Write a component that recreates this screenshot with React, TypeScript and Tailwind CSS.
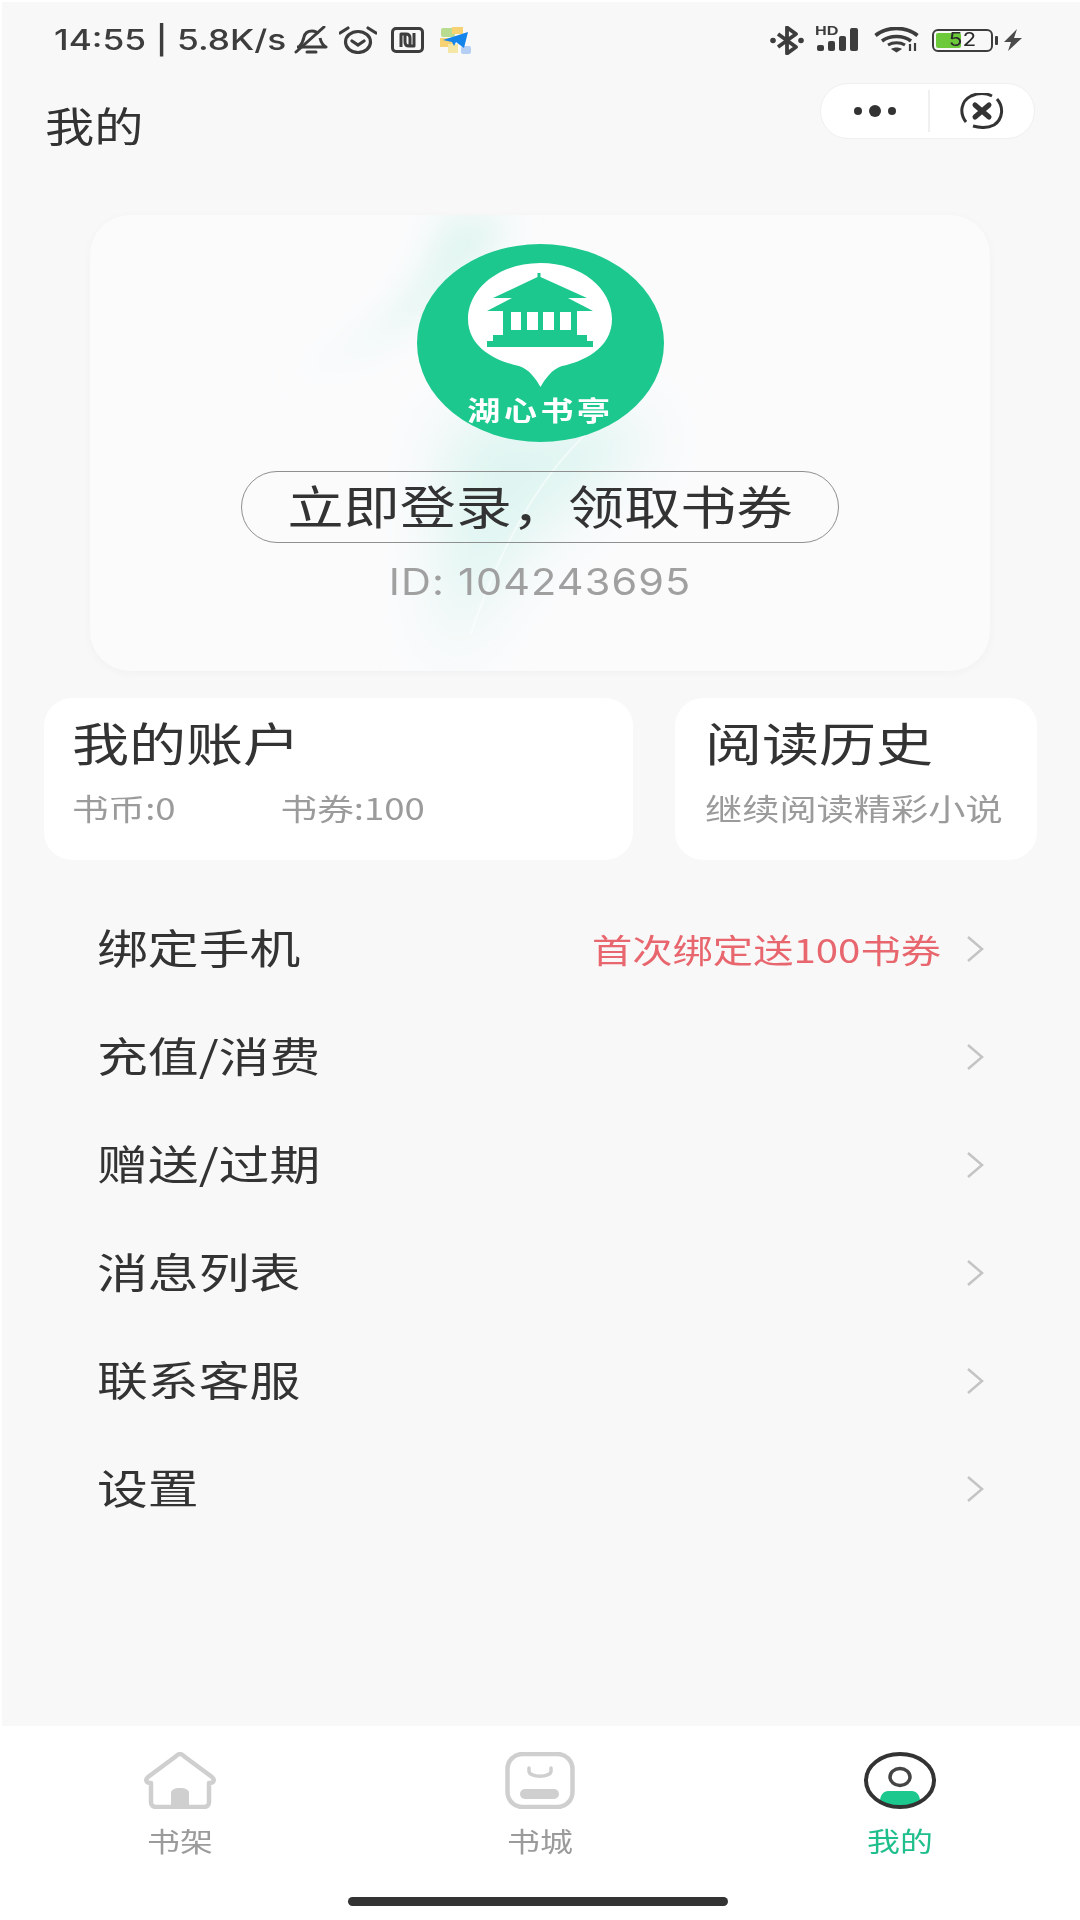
const cjk = "font-['Noto_Sans_CJK_SC','Noto_Sans',sans-serif]";

const menu = [
  { label: "绑定手机", hint: "首次绑定送100书券" },
  { label: "充值/消费" },
  { label: "赠送/过期" },
  { label: "消息列表" },
  { label: "联系客服" },
  { label: "设置" },
];

function BellOff() {
  return (
    <svg width="34" height="28" viewBox="0 0 34 28" fill="none" stroke="#3d3d3d" strokeWidth="3">
      <path d="M5 21c3-3 4-5 5-10 1-4 4-6 8-6 3 0 5 1 6 3M26 12c1 4 2 7 6 9H3" strokeLinejoin="round" />
      <path d="M2 26 30 1M13 26h9" strokeLinecap="round" />
    </svg>
  );
}

function Alarm() {
  return (
    <svg width="38" height="28" viewBox="0 0 38 28" fill="none" stroke="#3d3d3d" strokeWidth="3.2">
      <ellipse cx="19" cy="16" rx="12.5" ry="10.5" />
      <path d="M13 15l6 4 6-4M1 7l8-5M37 7l-8-5" strokeLinecap="round" />
    </svg>
  );
}

function Nfc() {
  return (
    <svg width="33" height="26" viewBox="0 0 33 26" fill="none" stroke="#3d3d3d" strokeWidth="3">
      <rect x="1.5" y="1.5" width="30" height="23" rx="3.5" />
      <path d="M10 20V7h5c3 0 4 2 4 4v9M23 6v13h-5c-3 0-4-2-4-4V7" strokeLinejoin="round" />
    </svg>
  );
}

function AppIcon() {
  return (
    <svg width="32" height="27" viewBox="0 0 32 27">
      <rect x="1" y="1" width="14" height="9" rx="2" fill="#b9dd90" />
      <rect x="12" y="0" width="11" height="7" fill="#f6d273" />
      <rect x="0" y="11" width="14" height="9" fill="#f6d273" />
      <rect x="8" y="17" width="10" height="9" fill="#f4e6a5" />
      <rect x="21" y="19" width="10" height="8" rx="2" fill="#b5cff4" />
      <path d="M3 13 28 5 24 21 16 15 14 19 12 15Z" fill="#1284ea" />
    </svg>
  );
}

function Bluetooth() {
  return (
    <svg width="34" height="29" viewBox="0 0 34 29" fill="none" stroke="#3d3d3d" strokeWidth="3.8">
      <path d="M8 8l18 13-9 6.500V1.500l9 6.500L8 21" strokeLinejoin="round" />
      <circle cx="3" cy="14.500" r="2.800" fill="#3d3d3d" stroke="none" />
      <circle cx="31" cy="14.500" r="2.800" fill="#3d3d3d" stroke="none" />
    </svg>
  );
}

function Signal() {
  return (
    <div className="relative w-[47px] h-[24px]">
      <span className="absolute left-0 top-[-3px] text-[13px] leading-[12px] font-bold text-[#3d3d3d] font-['Liberation_Sans',sans-serif] scale-x-125 origin-left">HD</span>
      <svg className="absolute inset-0" width="47" height="24" viewBox="0 0 47 24" fill="#3d3d3d">
        <rect x="2" y="17" width="7" height="6" rx="2" />
        <rect x="13" y="13" width="7" height="10" rx="2" />
        <rect x="24" y="8" width="7" height="15" rx="2" />
        <rect x="35" y="0" width="8" height="23" rx="2" />
      </svg>
    </div>
  );
}

function Wifi() {
  return (
    <svg width="45" height="26" viewBox="0 0 45 26" fill="none" stroke="#3d3d3d" strokeWidth="3.6">
      <path d="M1.500 8.500C13 -1 32 -1 43.500 8.500M8 14c8-6 21-6 29 0" />
      <path d="M14 18c5-3 12-3 17 0" strokeWidth="3" />
      <path d="M17 22c3-2 8-2 11 0l-5.500 3.500Z" fill="#3d3d3d" stroke="none" />
      <path d="M36 17v7M41 16v8" strokeWidth="2.200" />
    </svg>
  );
}

function Battery() {
  return (
    <div className="flex items-center">
      <div className="relative w-[61px] h-[23px] rounded-[6px] border-[2.5px] border-[#3d3d3d] p-[2px]">
        <div className="w-[25px] h-full rounded-[2px] bg-[#6cc93a]" />
        <span className="absolute inset-0 flex items-center justify-center text-[18px] leading-none text-[#2a2a2a] font-['Inter',sans-serif] scale-x-125">52</span>
      </div>
      <div className="ml-[2px] w-[3px] h-[9px] rounded-[1px] bg-[#3d3d3d]" />
    </div>
  );
}

function Bolt() {
  return (
    <svg width="18" height="22" viewBox="0 0 18 22" fill="#4a4a4a">
      <path d="M13 0 0 13h7l-3 9 14-13h-8Z" />
    </svg>
  );
}

function CloseRing() {
  return (
    <svg width="44" height="36" viewBox="0 0 44 36" fill="none" stroke="#333">
      <path d="M6 29C-1 20 1 8 11 3c7-3 15-3 21 0" strokeWidth="3" />
      <path d="M37 6c7 8 6 20-3 26-6 3-14 3-21 1" strokeWidth="3" />
      <path d="M15 12l14 12M29 12 15 24" strokeWidth="5" strokeLinecap="round" />
    </svg>
  );
}

function Logo() {
  return (
    <div className="relative w-[247px] h-[198px]">
      <svg width="247" height="198" viewBox="0 0 247 198">
        <ellipse cx="123.500" cy="99" rx="123.500" ry="99" fill="#1dc88f" />
        <path d="M123.500 19C165 19 195 45 195 75c0 30-30 43-50 47-10 3-17 13-21.500 21-4.500-8-11.500-18-21.500-21-20-4-51-17-51-47 0-30 31-56 72.500-56Z" fill="#fff" />
        <g fill="#1dc88f">
          <path d="M120.500 33V29h3v4l46.500 21h-19l25 13H70l25-13H76Z" />
          <rect x="86" y="67" width="74" height="25" />
          <rect x="76" y="91" width="94" height="7" />
          <rect x="70" y="97" width="106" height="6" />
        </g>
        <g fill="#fff">
          <rect x="94" y="68" width="10" height="18" />
          <rect x="110" y="68" width="11" height="18" />
          <rect x="126" y="68" width="11" height="18" />
          <rect x="143" y="68" width="11" height="18" />
        </g>
      </svg>
      <span className={`absolute left-0 right-0 top-[149px] text-center whitespace-nowrap text-[27px] leading-[34px] font-bold tracking-[3px] text-white scale-x-[1.22] ${cjk}`}>
        湖心书亭
      </span>
    </div>
  );
}

function CardGlow() {
  return (
    <svg className="absolute inset-0 w-full h-full" viewBox="0 0 899 456" preserveAspectRatio="none" fill="none">
      <defs>
        <filter id="soft" x="-30%" y="-30%" width="160%" height="160%">
          <feGaussianBlur stdDeviation="16" />
        </filter>
        <filter id="softer" x="-30%" y="-30%" width="160%" height="160%">
          <feGaussianBlur stdDeviation="30" />
        </filter>
      </defs>
      <path d="M420 0C400 60 330 120 180 170 300 130 340 60 350 0Z" fill="#e2f6f2" filter="url(#soft)" />
      <path d="M360 205C420 195 500 195 570 215 520 270 460 300 420 350 380 400 365 430 360 456 350 380 345 280 360 205Z" fill="#dff5f1" filter="url(#softer)" />
      <path d="M500 215C450 260 410 330 380 420" stroke="#ffffff" strokeWidth="2" opacity="0.5" />
    </svg>
  );
}

function TabIcon({ name }: { name: string }) {
  if (name === "home") {
    return (
      <svg width="72" height="57" viewBox="0 0 72 57" fill="none" stroke="#cfcfcf" strokeWidth="4.500">
        <path d="M36 2 C34 2 33 3 31 5L4 25c-3 3-2 6 3 6V50c0 3 2 5 5 5H60c3 0 5-2 5-5V31c5 0 6-3 3-6L41 5c-2-2-3-3-5-3Z" strokeLinejoin="round" />
        <path d="M27 55V41c0-3 3-5 9-5s9 2 9 5v14Z" fill="#cfcfcf" stroke="none" />
      </svg>
    );
  }
  if (name === "store") {
    return (
      <svg width="70" height="57" viewBox="0 0 70 57" fill="none" stroke="#cfcfcf">
        <rect x="2.500" y="2" width="65" height="53" rx="15" strokeWidth="4.500" />
        <path d="M24 16v3c0 7 22 7 22 0v-3" strokeWidth="3.500" strokeLinecap="round" />
        <rect x="15" y="37" width="39" height="10" rx="5" fill="#cfcfcf" stroke="none" />
      </svg>
    );
  }
  return (
    <svg width="72" height="57" viewBox="0 0 72 57" fill="none">
      <path d="M16 51V49c0-6 4-10 8-10h24c4 0 8 4 8 10v2c-4 4-12 5-20 5s-16-1-20-5Z" fill="#1dc88f" />
      <ellipse cx="36" cy="25" rx="10" ry="8.500" stroke="#444" strokeWidth="3.500" />
      <ellipse cx="36" cy="28.500" rx="34" ry="26.500" stroke="#333" strokeWidth="4" />
    </svg>
  );
}

function TabItem({ icon, label, active }: { icon: string; label: string; active?: boolean }) {
  return (
    <div className="flex flex-col items-center">
      <TabIcon name={icon} />
      <span className={`mt-[14px] text-[27px] leading-[36px] scale-x-[1.22] ${active ? "text-[#1fbf8b]" : "text-[#9b9b9b]"}`}>{label}</span>
    </div>
  );
}

export default function App() {
  return (
    <div className={`relative w-[1080px] h-[1920px] flex flex-col bg-[#f8f8f8] overflow-hidden ${cjk}`}>
      {/* Status bar */}
      <div className="h-[80px] flex items-center justify-between pl-[54px] pr-[58px] text-[#3d3d3d]">
        <div className="flex items-center">
          <span className="w-[240px] text-[28px] leading-none font-medium whitespace-nowrap font-['Inter',sans-serif] origin-left scale-x-[1.26]">14:55 | 5.8K/s</span>
          <BellOff />
          <div className="ml-[11px]"><Alarm /></div>
          <div className="ml-[14px]"><Nfc /></div>
          <div className="ml-[16px]"><AppIcon /></div>
        </div>
        <div className="flex items-center">
          <Bluetooth />
          <div className="ml-[11px]"><Signal /></div>
          <div className="ml-[12px]"><Wifi /></div>
          <div className="ml-[13px]"><Battery /></div>
          <div className="ml-[6px]"><Bolt /></div>
        </div>
      </div>

      {/* Title row */}
      <div className="h-[135px] flex items-start justify-between pl-[45px] pr-[45px]">
        <h1 className="mt-[16px] text-[41px] leading-[56px] font-normal text-[#333] origin-left scale-x-[1.2]">我的</h1>
        <div className="mt-[3px] w-[215px] h-[56px] flex items-center rounded-full bg-white border border-[#efefef]">
          <div className="w-[107px] flex items-center justify-center gap-[7px]">
            <span className="w-[8px] h-[8px] rounded-full bg-[#333]" />
            <span className="w-[12px] h-[12px] rounded-full bg-[#333]" />
            <span className="w-[8px] h-[8px] rounded-full bg-[#333]" />
          </div>
          <div className="w-[2px] h-[42px] bg-[#f0f0f0]" />
          <div className="flex-1 flex items-center justify-center"><CloseRing /></div>
        </div>
      </div>

      {/* Login card */}
      <div className="relative ml-[90px] w-[900px] h-[456px] rounded-[40px] bg-[#fbfbfc] shadow-[0_2px_10px_rgba(0,0,0,0.03)] overflow-hidden flex flex-col items-center pt-[29px]">
        <CardGlow />
        <div className="relative flex flex-col items-center">
          <Logo />
          <div className="mt-[29px] w-[598px] h-[72px] rounded-full border border-[#8f8f8f] flex items-center justify-center text-[#333] whitespace-nowrap">
            <span className="text-[46px] leading-[60px] mt-[-6px] scale-x-[1.22]">立即登录，领取书券</span>
          </div>
          <div className="mt-[17px] text-[37px] leading-[44px] tracking-[1px] text-[#a0a0a0] font-['Inter',sans-serif] font-normal scale-x-[1.12]">
            ID: 104243695
          </div>
        </div>
      </div>

      {/* Account cards */}
      <div className="mt-[27px] ml-[44px] flex gap-[42px]">
        <div className="w-[589px] h-[162px] rounded-[28px] bg-white pl-[28px] pt-[15px]">
          <div className="text-[46px] leading-[56px] text-[#333] origin-left scale-x-[1.24]">我的账户</div>
          <div className="mt-[18px] flex text-[30px] leading-[40px] text-[#9b9b9b] origin-left scale-x-[1.22]">
            <span className="w-[171px]">书币:0</span>
            <span>书券:100</span>
          </div>
        </div>
        <div className="w-[362px] h-[162px] rounded-[28px] bg-white pl-[30px] pt-[15px]">
          <div className="text-[46px] leading-[56px] text-[#333] origin-left scale-x-[1.24]">阅读历史</div>
          <div className="mt-[18px] text-[30px] leading-[40px] text-[#9b9b9b] whitespace-nowrap origin-left scale-x-[1.24]">继续阅读精彩小说</div>
        </div>
      </div>

      {/* Menu */}
      <div className="mt-[35px] flex flex-col">
        {menu.map((item) => (
          <div key={item.label} className="h-[108px] flex items-center pl-[97px] pr-[95px]">
            <span className="flex-1 text-[41px] leading-[56px] mt-[-6px] text-[#333] origin-left scale-x-[1.24]">{item.label}</span>
            {item.hint && <span className="mr-[24px] text-[33px] leading-[40px] text-[#e8666e] origin-right scale-x-[1.22]">{item.hint}</span>}
            <svg width="20" height="28" viewBox="0 0 20 28" fill="none" stroke="#c4c4c4" strokeWidth="2.500">
              <path d="M3 2l14 12L3 26" />
            </svg>
          </div>
        ))}
      </div>

      <div className="flex-1" />

      {/* Tab bar */}
      <div className="relative h-[194px] bg-white pt-[26px] grid grid-cols-3 content-start">
        <TabItem icon="home" label="书架" />
        <TabItem icon="store" label="书城" />
        <TabItem icon="me" label="我的" active />
        <div className="absolute left-[348px] bottom-[14px] w-[380px] h-[9px] rounded-full bg-[#333]" />
      </div>

      {/* Thin white edge of the capture */}
      <div className="absolute inset-0 pointer-events-none border-t-2 border-l-2 border-white" />
    </div>
  );
}
